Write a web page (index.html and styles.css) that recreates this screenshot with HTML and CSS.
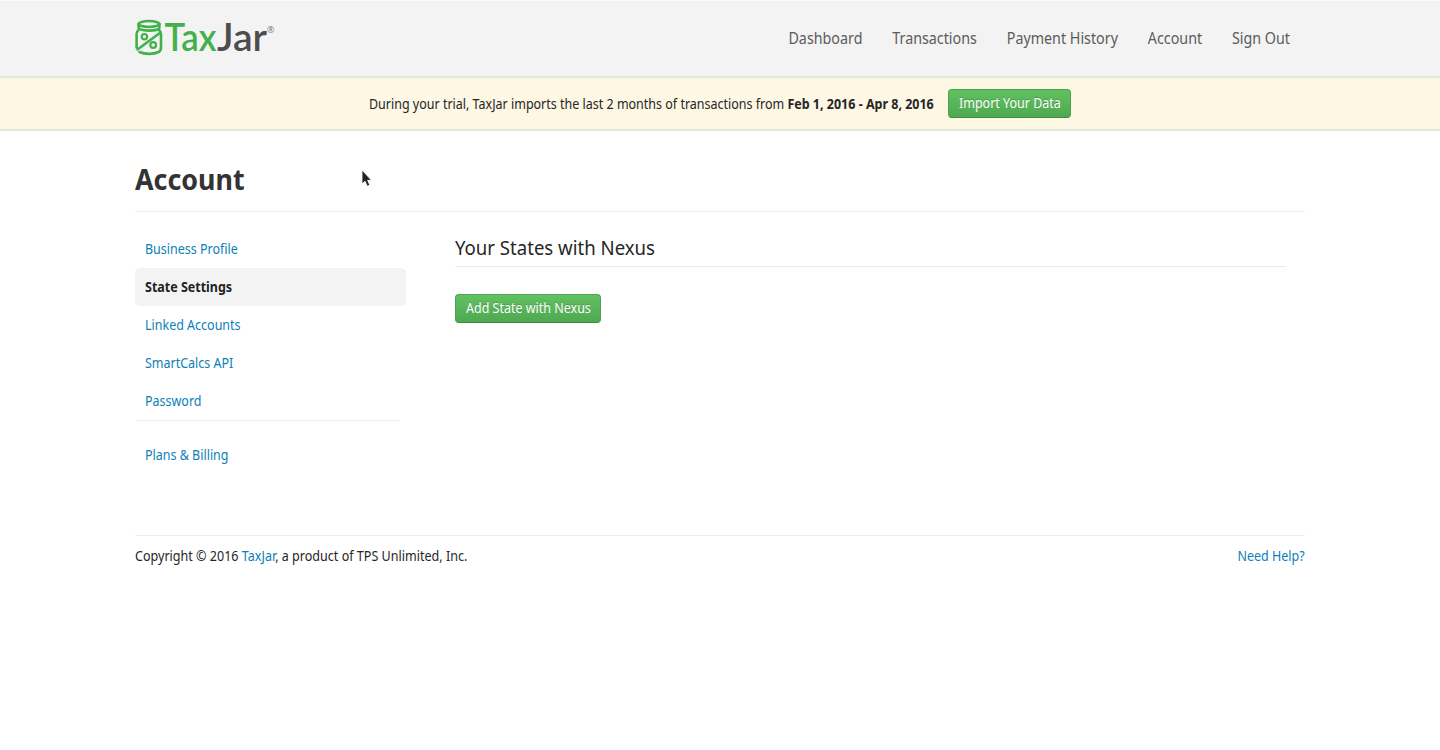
FILE: index.html
```html
<!DOCTYPE html>
<html lang="en">
<head>
<meta charset="utf-8">
<title>TaxJar - State Settings</title>
<link rel="stylesheet" href="styles.css">
</head>
<body>
<header class="topbar">
  <div class="container topbar-inner">
    <a class="logo" href="#" aria-label="TaxJar">
      <svg width="142" height="44" viewBox="0 0 142 44">
        <g fill="none" stroke="#43b14b" stroke-width="2.6" stroke-linecap="round" stroke-linejoin="round">
          <ellipse cx="14" cy="6" rx="10.400" ry="3"/>
          <path d="M3.600 6v3.800c0 1.800 4.500 2.800 10.400 2.800s10.400-1 10.400-2.800V6"/>
          <path d="M3.600 12C2 13.200 1.600 14.200 1.600 16v13.500M4.500 34c5 2.500 14.500 2.500 19 0 1.700-.9 2.500-2.100 2.500-4.500V16c0-1.800-.4-2.800-2-4M25.500 14.500 2.500 31.500"/>
          <circle cx="9.400" cy="18.700" r="2.700" stroke-width="2.200"/>
          <circle cx="18.200" cy="27" r="2.900" stroke-width="2.200"/>
        </g>
        <text class="logo-tax" x="29.500" y="33" textLength="52" lengthAdjust="spacingAndGlyphs">Tax</text>
        <text class="logo-jar" x="82" y="33" textLength="50" lengthAdjust="spacingAndGlyphs">Jar</text>
        <text class="logo-reg" x="132" y="15">®</text>
      </svg>
    </a>
    <nav class="main-nav">
      <a href="#">Dashboard</a>
      <a href="#">Transactions</a>
      <a href="#">Payment History</a>
      <a href="#">Account</a>
      <a href="#">Sign Out</a>
    </nav>
  </div>
</header>
<div class="trial-banner">
  <p class="trial-text"><span class="narrow">During your trial, TaxJar imports the last 2 months of transactions from <strong>Feb 1, 2016 - Apr 8, 2016</strong></span></p>
  <a class="button import" href="#"><span class="narrow">Import Your Data</span></a>
</div>
<main class="container">
  <h1 class="page-title"><span class="narrow">Account</span></h1>
  <div class="columns">
    <nav class="side-nav">
      <a class="side-link" href="#"><span class="narrow">Business Profile</span></a>
      <a class="side-link active" href="#"><span class="narrow">State Settings</span></a>
      <a class="side-link" href="#"><span class="narrow">Linked Accounts</span></a>
      <a class="side-link" href="#"><span class="narrow">SmartCalcs API</span></a>
      <a class="side-link" href="#"><span class="narrow">Password</span></a>
      <hr class="side-divider">
      <a class="side-link" href="#"><span class="narrow">Plans &amp; Billing</span></a>
    </nav>
    <section class="content">
      <h2 class="section-title"><span class="narrow">Your States with Nexus</span></h2>
      <a class="button add-state" href="#"><span class="narrow">Add State with Nexus</span></a>
    </section>
  </div>
  <footer class="footer">
    <span class="narrow copyright">Copyright © 2016 <a class="link" href="#">TaxJar</a>, a product of TPS Unlimited, Inc.</span>
    <a class="link narrow from-right" href="#">Need Help?</a>
  </footer>
</main>
<svg class="cursor" width="14" height="20" viewBox="0 0 14 20"><path d="M1 1v14l3-2.800 2.300 5 2.500-1.100-2.200-4.800H10.500z" fill="#222" stroke="#fff" stroke-width=".8"/></svg>
</body>
</html>
```
FILE: styles.css
```css
* { box-sizing: border-box; }
body {
  margin: 0;
  background: #fff;
  color: #262626;
  font: 13.5px/20px "Noto Sans", "Open Sans", sans-serif;
}
a { text-decoration: none; }
.container { width: 1170px; margin: 0 auto; }

/* Condenses the typeface horizontally */
.narrow {
  display: inline-block;
  white-space: nowrap;
  transform: scaleX(.925);
  transform-origin: 0 50%;
}
.narrow.from-right { transform-origin: 100% 50%; }
.narrow.copyright { transform: scaleX(.93); }

.topbar { height: 76px; border-top: 1px solid #fafafa; background: #f3f3f3; }
.topbar-inner { display: flex; justify-content: space-between; }
.logo { display: block; height: 44px; margin-top: 17px; }
.logo svg { display: block; overflow: visible; }
.logo-tax { font: 600 37.5px Lato, sans-serif; fill: #43b14b; }
.logo-jar { font: 600 37.5px Lato, sans-serif; fill: #4d4d4f; }
.logo-reg { font: 9px "Open Sans", sans-serif; fill: #777; }
.main-nav {
  display: flex;
  gap: 32.4px;
  margin: 27px 15px 0 0;
  font-size: 15.5px;
  transform: scaleX(.922);
  transform-origin: 100% 50%;
}
.main-nav a { color: #5b5b5b; }

.trial-banner {
  display: flex;
  justify-content: center;
  align-items: center;
  gap: 13px;
  height: 55px;
  border: solid #e3e5d5;
  border-width: 2px 0;
  background: #fdf7e3;
}
.trial-text { width: 566px; margin: 0; }
.button {
  display: block;
  height: 29px;
  padding: 4px 10px;
  border: 1px solid #4aa44d;
  border-bottom-color: #3c8c40;
  border-radius: 4px;
  background: linear-gradient(#62c162, #4ea950);
  color: #fff;
  line-height: 18px;
  text-shadow: 0 -1px 0 rgba(0, 0, 0, .2);
}
.button.import { width: 123px; }
.button.add-state { width: 146px; }

.page-title {
  height: 81px;
  margin: 0;
  padding-top: 28px;
  border-bottom: 1px solid #eee;
  color: #333;
  font-size: 29px;
  line-height: 40px;
}
.columns { display: flex; height: 323px; padding-top: 18px; }
.side-nav { width: 271px; margin-right: 49px; }
.side-link { display: block; height: 38px; padding: 9px 10px; border-radius: 5px; color: #0c80b8; }
.side-link.active { background: #f3f3f3; color: #222; font-weight: 700; }
.side-divider { width: 264px; height: 1px; margin: 0 0 15px 1px; border: 0; background: #eee; }
.content { width: 831px; }
.section-title {
  height: 37px;
  margin: 0 0 27px;
  border-bottom: 1px solid #ebebeb;
  font-size: 20.1px;
  font-weight: 400;
  line-height: 35px;
}
.footer { display: flex; justify-content: space-between; padding-top: 10px; border-top: 1px solid #eee; }
.link { color: #0c80b8; }
.cursor { position: absolute; left: 361px; top: 169px; }
```
